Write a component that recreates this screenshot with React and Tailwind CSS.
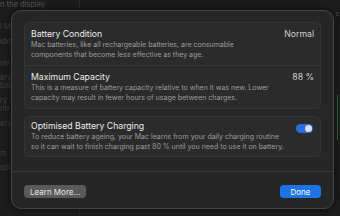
import React from 'react';

const font = { fontFamily: 'Inter, "Liberation Sans", sans-serif' };

const Row = ({ title, value, children, last }) => (
  <div className={`flex items-start justify-between px-[6px] pt-[6px] pb-[6px] ${last ? '' : 'border-b border-[#363636]'}`}>
    <div className="flex flex-col">
      <div className="text-[8.7px] leading-[11px] text-[#ebebeb]">{title}</div>
      <div className="text-[7px] leading-[9.5px] text-[#9c9c9c]">{children}</div>
    </div>
    {value}
  </div>
);

const Toggle = () => (
  <div className="mt-[3px] mr-[1px] flex h-[9px] w-[17px] items-center justify-end rounded-full bg-[#2a6de0] pr-[1px]">
    <div className="h-[7px] w-[7px] rounded-full bg-[#dedede]" />
  </div>
);

const App = () => {
  const bgLabels = [
    ['n the display', 'mt-[0px]'],
    ['l M', 'mt-[12px]'],
    ['ide', 'mt-[5px]'],
    ['ntr', 'mt-[12px]'],
    ['ery', 'mt-[4px]'],
    ['bar', 'mt-[-2px]'],
    ['ry', 'mt-[5px]'],
    ['ntr', 'mt-[-2px]'],
    ['ery', 'mt-[5px]'],
    ['m', 'mt-[20px]'],
    ['spl', 'mt-[4px]'],
  ];

  return (
    <div className="relative h-[216px] w-[340px] overflow-hidden bg-[#1d1d1d]" style={font}>
      {/* settings window behind the sheet */}
      <div className="flex h-full">
        <div className="flex w-[80px] flex-col border-r border-[#2a2a2a]">
          {bgLabels.map(([t, m], i) => (
            <div key={i} className={`${m} text-[7.5px] leading-[10px] ${i === 0 ? 'text-[#5a5a5a]' : 'text-[#444]'}`}>
              {t}
            </div>
          ))}
        </div>
        <div className="flex-1" />
        <div className="flex w-[6px] flex-col items-center pt-[10px]">
          <div className="text-[6px] leading-[8px] text-[#555]">s</div>
          <div className="mt-[77px] h-[45px] w-[1px] bg-[#2f6b35]" />
        </div>
      </div>

      {/* sheet */}
      <div className="absolute left-[11px] top-[10px] flex h-[199px] w-[323px] flex-col rounded-[10px] border border-[#454545] bg-[#262626] shadow-[0_0_12px_rgba(0,0,0,0.6)]">
        <div className="flex flex-col gap-[7px] px-[12px] pt-[11px]">
          <div className="flex flex-col rounded-[5px] border border-[#343434] bg-[#2b2b2b]">
            <Row
              title="Battery Condition"
              value={<div className="text-[8.7px] leading-[11px] text-[#cfcfcf]">Normal</div>}
            >
              Mac batteries, like all rechargeable batteries, are consumable
              <br />
              components that become less effective as they age.
            </Row>
            <Row
              title="Maximum Capacity"
              value={<div className="text-[8.7px] leading-[11px] text-[#cfcfcf]">88 %</div>}
              last
            >
              This is a measure of battery capacity relative to when it was new. Lower
              <br />
              capacity may result in fewer hours of usage between charges.
            </Row>
          </div>

          <div className="flex flex-col rounded-[5px] border border-[#343434] bg-[#2b2b2b]">
            <div className="flex items-start justify-between px-[6px] pt-[4px] pb-[5px]">
              <div className="flex flex-col">
                <div className="text-[8.7px] leading-[11px] text-[#ebebeb]">Optimised Battery Charging</div>
                <div className="text-[7px] leading-[9.5px] text-[#9c9c9c]">
                  To reduce battery ageing, your Mac learns from your daily charging routine
                  <br />
                  so it can wait to finish charging past 80 % until you need to use it on battery.
                </div>
              </div>
              <Toggle />
            </div>
          </div>
        </div>

        <div className="mt-[14px] border-t border-[#383838]" />

        <div className="flex items-center justify-between px-[12px] pt-[13px]">
          <button className="flex h-[13px] items-center rounded-[4px] bg-[#5a5a5a] px-[6px] text-[8px] text-[#e8e8e8]">
            Learn More...
          </button>
          <button className="flex h-[13px] w-[41px] items-center justify-center rounded-[4px] bg-[#1f73e6] text-[8px] text-white">
            Done
          </button>
        </div>
      </div>
    </div>
  );
};

export default App;
